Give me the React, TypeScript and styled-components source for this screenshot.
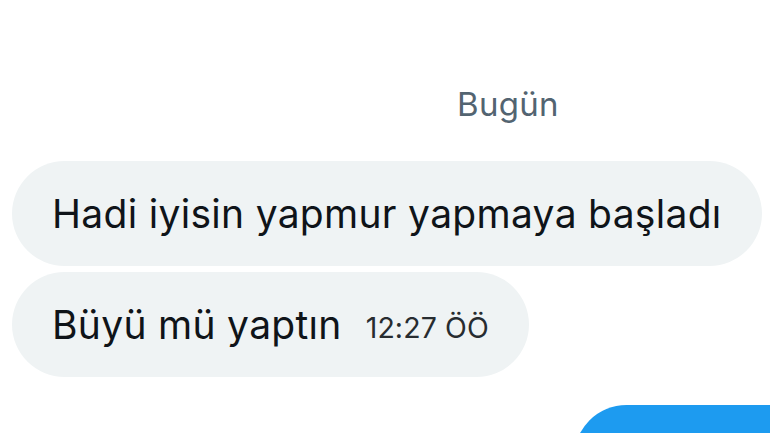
import { createGlobalStyle, styled } from "styled-components";

const GlobalStyle = createGlobalStyle`
  html, body {
    margin: 0;
    padding: 0;
    background: #ffffff;
    overflow: hidden;
  }
  body {
    font-family: Inter, "Noto Sans", sans-serif;
    color: #0f1419;
  }
`;

const Conversation = styled.div`
  box-sizing: border-box;
  width: 1016px;
  height: 433px;
  overflow: hidden;
  padding: 0 12px;
  display: flex;
  flex-direction: column;
`;

const DayLabel = styled.div`
  align-self: center;
  margin-top: 84px;
  height: 40px;
  line-height: 40px;
  font-size: 33px;
  letter-spacing: 0.3px;
  color: #536471;
`;

const Group = styled.div<{ $mine?: boolean }>`
  display: flex;
  flex-direction: column;
  align-items: ${(p) => (p.$mine ? "flex-end" : "flex-start")};
  gap: 6px;
  margin-top: ${(p) => (p.$mine ? "28px" : "37px")};
`;

const Bubble = styled.div<{ $mine?: boolean }>`
  box-sizing: border-box;
  flex-shrink: 0;
  height: 105px;
  padding: 0 40px;
  border-radius: 53px;
  display: flex;
  align-items: center;
  gap: 24px;
  background: ${(p) => (p.$mine ? "#1d9bf0" : "#eff3f4")};
  color: ${(p) => (p.$mine ? "#ffffff" : "#0f1419")};
  font-size: 39px;
  letter-spacing: 0.3px;
  white-space: nowrap;
`;

const Time = styled.span`
  font-size: 28.5px;
  letter-spacing: 0.1px;
  color: #272c30;
  padding-top: 6px;
`;

export default function App() {
  return (
    <>
      <GlobalStyle />
      <Conversation>
        <DayLabel>Bugün</DayLabel>
        <Group>
          <Bubble>Hadi iyisin yapmur yapmaya başladı</Bubble>
          <Bubble>
            Büyü mü yaptın
            <Time>12:27 ÖÖ</Time>
          </Bubble>
        </Group>
        <Group $mine>
          <Bubble $mine style={{ width: 430 }} />
        </Group>
      </Conversation>
    </>
  );
}
